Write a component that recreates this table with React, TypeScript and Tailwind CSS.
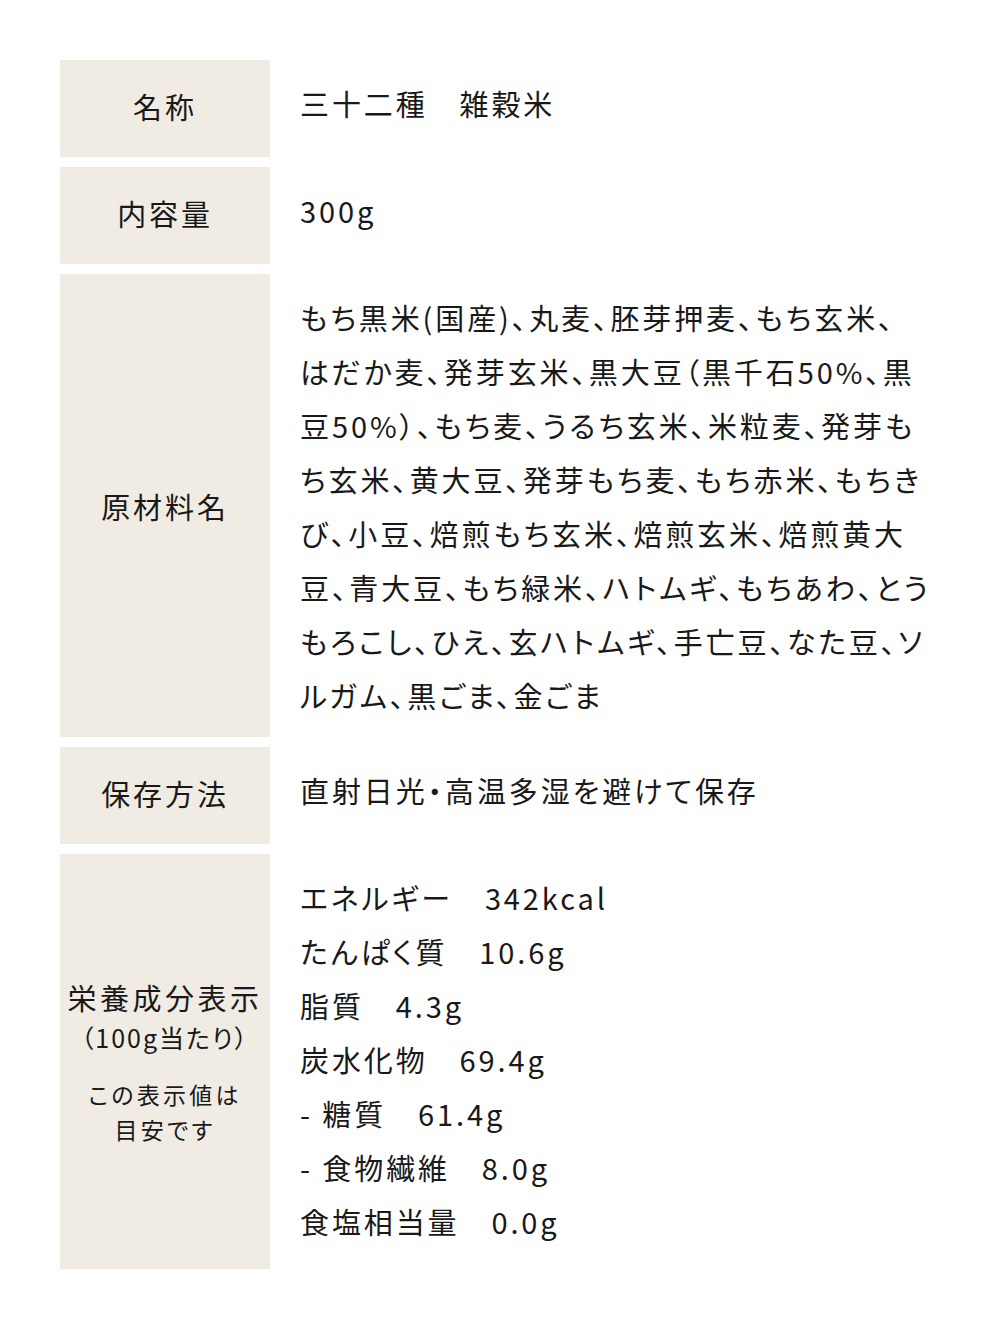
import React from "react";

const ingredients = [
  "もち黒米(国産)、丸麦、胚芽押麦、もち玄米、",
  "はだか麦、発芽玄米、黒大豆（黒千石50%、黒",
  "豆50%）、もち麦、うるち玄米、米粒麦、発芽も",
  "ち玄米、黄大豆、発芽もち麦、もち赤米、もちき",
  "び、小豆、焙煎もち玄米、焙煎玄米、焙煎黄大",
  "豆、青大豆、もち緑米、ハトムギ、もちあわ、とう",
  "もろこし、ひえ、玄ハトムギ、手亡豆、なた豆、ソ",
  "ルガム、黒ごま、金ごま",
];

const nutrition = [
  "エネルギー　342kcal",
  "たんぱく質　10.6g",
  "脂質　4.3g",
  "炭水化物　69.4g",
  "- 糖質　61.4g",
  "- 食物繊維　8.0g",
  "食塩相当量　0.0g",
];

function Row({
  label,
  children,
  pb = "pb-[27px]",
}: {
  label: React.ReactNode;
  children: React.ReactNode;
  pb?: string;
}) {
  return (
    <div className="flex">
      <div className="w-[210px] shrink-0 bg-[#f0ece4] flex items-center justify-center text-center">
        {label}
      </div>
      <div className={`flex-1 pl-[30px] pt-[16px] ${pb}`}>{children}</div>
    </div>
  );
}

export default function App() {
  return (
    <div
      className="bg-white w-[1000px] min-h-[1330px] px-[60px] pt-[60px] text-[#191919] text-[29px] leading-[54px] tracking-[0.1em] [font-feature-settings:'palt']"
      style={{ fontFamily: '"Noto Sans CJK JP", "Noto Sans", sans-serif' }}
    >
      <div className="flex flex-col gap-[10px]">
        <Row label={<div className="-mt-[6px]">名称</div>}>三十二種　雑穀米</Row>
        <Row label={<div className="-mt-[6px]">内容量</div>}>300g</Row>
        <Row label="原材料名" pb="pb-[15px]">
          {ingredients.map((line, i) => (
            <div key={i} className="whitespace-nowrap">
              {line}
            </div>
          ))}
        </Row>
        <Row label={<div className="-mt-[6px]">保存方法</div>}>直射日光・高温多湿を避けて保存</Row>
        <Row
          pb="pb-[21px]"
          label={
            <div className="flex flex-col items-center">
              <div className="leading-[40px] tracking-[0.12em]">栄養成分表示</div>
              <div className="text-[25px] leading-[40px] tracking-[0.08em]">（100g当たり）</div>
              <div className="mt-[20px] text-[23px] leading-[35px] tracking-[0.14em]">
                この表示値は
                <br />
                目安です
              </div>
            </div>
          }
        >
          {nutrition.map((line, i) => (
            <div key={i} className="whitespace-pre">
              {line}
            </div>
          ))}
        </Row>
      </div>
    </div>
  );
}
